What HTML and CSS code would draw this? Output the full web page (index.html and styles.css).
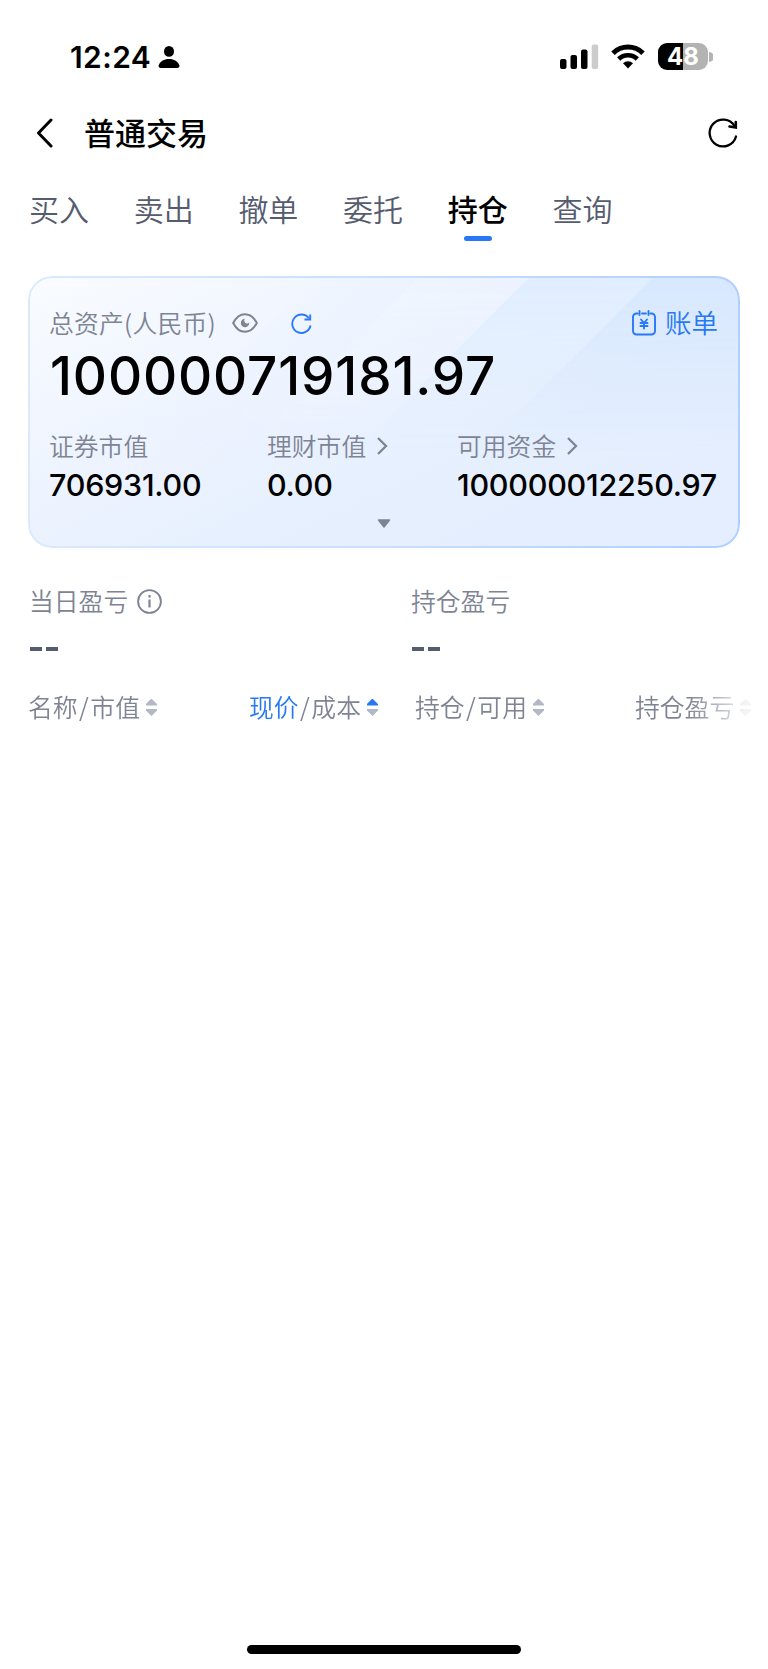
FILE: index.html
```html
<!DOCTYPE html>
<html lang="zh-CN">
<head>
    <meta charset="UTF-8">
    <meta name="viewport" content="width=device-width, initial-scale=1.0">
    <title>普通交易</title>
    <link rel="stylesheet" href="styles.css">
</head>
<body>
    <div class="status-bar">
        <span class="time">12:24</span>
        <svg class="person" width="22" height="22" viewBox="0 0 22 22">
            <ellipse cx="11" cy="5.4" rx="5" ry="5.4"/>
            <path d="M3 22C1 22 .3 21 .7 19.3C1.8 15.5 5.8 13 11 13s9.200 2.500 10.300 6.300C21.700 21 21 22 19 22z"/>
        </svg>
        <svg class="signal" width="39" height="25" viewBox="0 0 39 25">
            <rect x="0" y="15" width="6.500" height="10" rx="2"/>
            <rect x="10.500" y="11" width="6.500" height="14" rx="2"/>
            <rect x="21" y="5.500" width="6.500" height="19.500" rx="2"/>
            <rect x="31.700" y="0.500" width="6.500" height="24.500" rx="2" fill="#ccc"/>
        </svg>
        <svg class="wifi" width="34" height="25" viewBox="0 0 34 25">
            <path d="M2 9.200A21.500 21.500 0 0 1 32 9.200" fill="none" stroke="#000" stroke-width="5"/>
            <path d="M7.700 15A13.300 13.300 0 0 1 26.300 15" fill="none" stroke="#000" stroke-width="4.600"/>
            <path d="M17 24.500l-5-5.200a7.200 7.200 0 0 1 10 0z"/>
        </svg>
        <div class="battery"><span>48</span></div>
        <svg class="battery-cap" width="4" height="10" viewBox="0 0 4 10"><path d="M0 0a5 5 0 0 1 0 10z" fill="#b3b3b3"/></svg>
    </div>

    <header class="navbar">
        <svg width="17" height="30" viewBox="0 0 17 30"><path d="M15 2L2.500 15 15 28" fill="none" stroke="#000" stroke-width="3" stroke-linecap="round" stroke-linejoin="round"/></svg>
        <h1>普通交易</h1>
        <svg class="reload" width="30" height="30" viewBox="0 0 30 30">
            <path d="M28 18.500A13.400 13.400 0 1 1 26.500 8" fill="none" stroke="#000" stroke-width="2.300" stroke-linecap="round"/>
            <path d="M27.800 4v5.500L21.500 8.500" fill="none" stroke="#000" stroke-width="2.600" stroke-linecap="round"/>
        </svg>
    </header>

    <nav class="tabs">
        <a>买入</a>
        <a>卖出</a>
        <a>撤单</a>
        <a>委托</a>
        <a class="active">持仓</a>
        <a>查询</a>
    </nav>

    <section class="card">
        <div class="card-top">
            <span class="label">总资产(人民币)</span>
            <svg class="eye" width="26" height="20" viewBox="0 0 26 20">
                <path d="M1.200 10C4 4.500 8 1.200 13 1.200S22 4.500 24.800 10C22 15.500 18 18.800 13 18.800S4 15.500 1.200 10z" fill="none" stroke="#7e8493" stroke-width="2"/>
                <path d="M13 5.800A2.800 2.800 0 0 0 17.200 9.500A4.200 4.200 0 1 1 13 5.800z" fill="#7e8493"/>
            </svg>
            <svg class="mini-reload" width="21" height="21" viewBox="0 0 21 21">
                <path d="M19.500 12.500A9.200 9.200 0 1 1 17.800 5.200" fill="none" stroke="#2878ff" stroke-width="1.900"/>
                <path d="M19.200 1.500v5H13.500" fill="none" stroke="#2878ff" stroke-width="1.900"/>
            </svg>
            <svg class="bill-icon" width="24" height="26" viewBox="0 0 24 26" fill="none" stroke="#2878f5" stroke-width="1.900" stroke-linecap="round">
                <path d="M5.500 3.500H4.500A3.500 3.500 0 0 0 1 7v14a3.500 3.500 0 0 0 3.500 3.500h15A3.500 3.500 0 0 0 23 21V7a3.500 3.500 0 0 0-3.500-3.500h-1M10 3.500h4M7.500 1v4M16.500 1v4"/>
                <path d="M9 9.500l3 3.500 3-3.500M8.500 13h7M8.500 16h7M12 13v5.500"/>
            </svg>
            <span class="bill">账单</span>
        </div>
        <div class="total">100000719181.97</div>
        <div class="assets">
            <div class="asset">
                <div class="label">证券市值</div>
                <div class="value">706931.00</div>
            </div>
            <div class="asset">
                <div class="label">理财市值<svg width="12" height="20" viewBox="0 0 12 20"><path d="M2 2l8 8-8 8" fill="none" stroke="#7e8493" stroke-width="2.300"/></svg></div>
                <div class="value">0.00</div>
            </div>
            <div class="asset">
                <div class="label">可用资金<svg width="12" height="20" viewBox="0 0 12 20"><path d="M2 2l8 8-8 8" fill="none" stroke="#7e8493" stroke-width="2.300"/></svg></div>
                <div class="value">100000012250.97</div>
            </div>
        </div>
        <svg class="expand" width="14" height="9" viewBox="0 0 14 9"><path d="M1.500 1h11L7 8z" fill="#7e8493" stroke="#7e8493" stroke-width="1.500" stroke-linejoin="round"/></svg>
    </section>

    <section class="profits">
        <div class="profit">
            <div class="label">当日盈亏
                <svg width="25" height="25" viewBox="0 0 25 25">
                    <circle cx="12.500" cy="12.500" r="11.400" fill="none" stroke="#7e8493" stroke-width="1.900"/>
                    <path d="M12.500 10.500v8M12.500 6v2.600" stroke="#7e8493" stroke-width="2.200"/>
                </svg>
            </div>
            <div class="dashes"><i></i><i></i></div>
        </div>
        <div class="profit">
            <div class="label">持仓盈亏</div>
            <div class="dashes"><i></i><i></i></div>
        </div>
    </section>

    <div class="table-head">
        <div class="label">名称<em>/</em>市值<span class="sort"></span></div>
        <div class="label"><b>现价</b><em>/</em>成本<span class="sort up"></span></div>
        <div class="label">持仓<em>/</em>可用<span class="sort"></span></div>
        <div class="label">持仓盈亏<span class="sort"></span></div>
    </div>

    <div class="home-bar"></div>
</body>
</html>
```
FILE: styles.css
```css
* {
    box-sizing: border-box;
}

body {
    margin: 0;
    height: 1669px;
    display: flex;
    flex-direction: column;
    background-color: #fff;
    font-family: Inter, "Noto Sans CJK SC", sans-serif;
    color: #000;
    overflow: hidden;
}

svg {
    display: block;
    flex: none;
}

/* status bar */
.status-bar {
    display: flex;
    align-items: center;
    height: 70px;
    padding: 43px 55px 0 70px;
}

.time {
    width: 88px;
    padding-top: 1px;
    font-size: 30px;
    line-height: 27px;
    font-weight: 600;
    letter-spacing: 0.4px;
}

.signal {
    margin-left: auto;
}

.wifi {
    margin: 0 13px 0 12px;
}

.battery {
    width: 50px;
    height: 27px;
    border-radius: 9px;
    background: linear-gradient(90deg, #000 49%, #b3b3b3 49%);
    color: #fff;
    font-size: 24px;
    line-height: 27px;
    font-weight: 700;
    text-align: center;
}

.battery-cap {
    margin-left: 1px;
}

/* title row */
.navbar {
    display: flex;
    align-items: center;
    height: 66px;
    margin-top: 30px;
    padding: 0 30px 0 36px;
}

.navbar h1 {
    margin: 0 0 3px 31px;
    font-family: "Noto Sans CJK SC", sans-serif;
    font-size: 31px;
    font-weight: 500;
    line-height: 40px;
}

.reload {
    margin-left: auto;
}

/* tabs */
.tabs {
    display: flex;
    height: 76px;
    margin-top: 24px;
    padding-left: 29px;
    gap: 44.7px;
}

.tabs a {
    display: flex;
    flex-direction: column;
    align-items: center;
    font-size: 30px;
    line-height: 40px;
    font-weight: 350;
    color: #565c6f;
}

.tabs .active {
    font-weight: 500;
    color: #000;
}

.tabs .active::after {
    content: "";
    width: 28px;
    height: 5px;
    margin-top: 6px;
    border-radius: 3px;
    background-color: #2878f5;
}

.label {
    display: flex;
    align-items: center;
    height: 36px;
    font-family: "Noto Sans CJK SC", sans-serif;
    font-size: 24.8px;
    line-height: 34px;
    padding-bottom: 2px;
    font-weight: 350;
    color: #7e8493;
    white-space: nowrap;
}

/* asset card */
.card {
    position: relative;
    display: flex;
    flex-direction: column;
    height: 272px;
    margin: 10px 28px 0;
    padding: 29px 22px 0 21px;
    border-radius: 24px;
    background: linear-gradient(155deg, #f9fcff 0%, #eef4ff 35%, #e5effe 65%, #e5eeff 100%);
    overflow: hidden;
}

/* diagonal light bands fading towards the bottom */
.card::before {
    content: "";
    position: absolute;
    inset: 0;
    background: linear-gradient(135deg, transparent 200px, #ecf3ff 277px, #eff5ff 277px, #edf3fe 355px, #e1eeff 355px, #e1eeff 443px, #d8e8fe 443px, #d8e8fe);
    mask-image: linear-gradient(#000 5%, transparent 65%);
}

.card::after {
    content: "";
    position: absolute;
    inset: 0;
    border-radius: 24px;
    padding: 2px;
    background: linear-gradient(90deg, #dbe9ff, #c8dfff 50%, #afcfff);
    mask: linear-gradient(#000 0 0) content-box exclude, linear-gradient(#000 0 0);
}

.card > * {
    position: relative;
}

.card-top {
    display: flex;
    align-items: center;
    height: 36px;
}

.card-top .label {
    letter-spacing: 0.2px;
}

.eye {
    margin-left: 16px;
}

.mini-reload {
    margin-left: 33px;
}

.bill-icon {
    margin-left: auto;
}

.bill {
    margin-left: 9px;
    font-size: 26.5px;
    line-height: 36px;
    font-weight: 350;
    color: #2878f5;
}

.total {
    height: 66px;
    padding-left: 1px;
    font-size: 53px;
    line-height: 70px;
    font-weight: 500;
    letter-spacing: 0.85px;
}

.assets {
    display: grid;
    grid-template-columns: 218px 190px 1fr;
    margin-top: 21px;
}

.asset .label svg {
    margin: 2px 0 0 10px;
}

.value {
    font-size: 30.5px;
    line-height: 42px;
    font-weight: 500;
    letter-spacing: -0.25px;
}

.expand {
    margin: 13px auto 0;
}

/* profit summary */
.profits {
    display: grid;
    grid-template-columns: 382px 1fr;
    margin: 35px 0 0 29px;
}

.profits .label svg {
    margin: 2px 0 0 9px;
}

.dashes {
    display: flex;
    gap: 4px;
    padding: 28px 0 0 1px;
}

.dashes i {
    width: 12px;
    height: 4px;
    background-color: #565c6f;
}

/* column titles */
.table-head {
    display: grid;
    grid-template-columns: 221px 166px 220px 1fr;
    margin: 38px 0 0 28px;
    mask-image: linear-gradient(90deg, #000 660px, rgba(0, 0, 0, 0.15) 718px);
}

.table-head b {
    font-weight: 350;
    color: #2878f5;
}

.table-head em {
    padding: 0 1.5px;
    font-style: normal;
}

.sort {
    display: grid;
    gap: 3px;
    margin: 2px 0 0 6px;
}

.sort::before,
.sort::after {
    content: "";
    width: 11px;
    height: 7px;
    background-color: #b3b8c6;
    clip-path: polygon(50% 0, 100% 80%, 100% 100%, 0 100%, 0 80%);
}

.sort::after {
    transform: rotate(180deg);
}

.sort.up::before {
    background-color: #2878f5;
}

.home-bar {
    width: 274px;
    height: 9px;
    margin: auto auto 15px;
    border-radius: 5px;
    background-color: #000;
}
```
